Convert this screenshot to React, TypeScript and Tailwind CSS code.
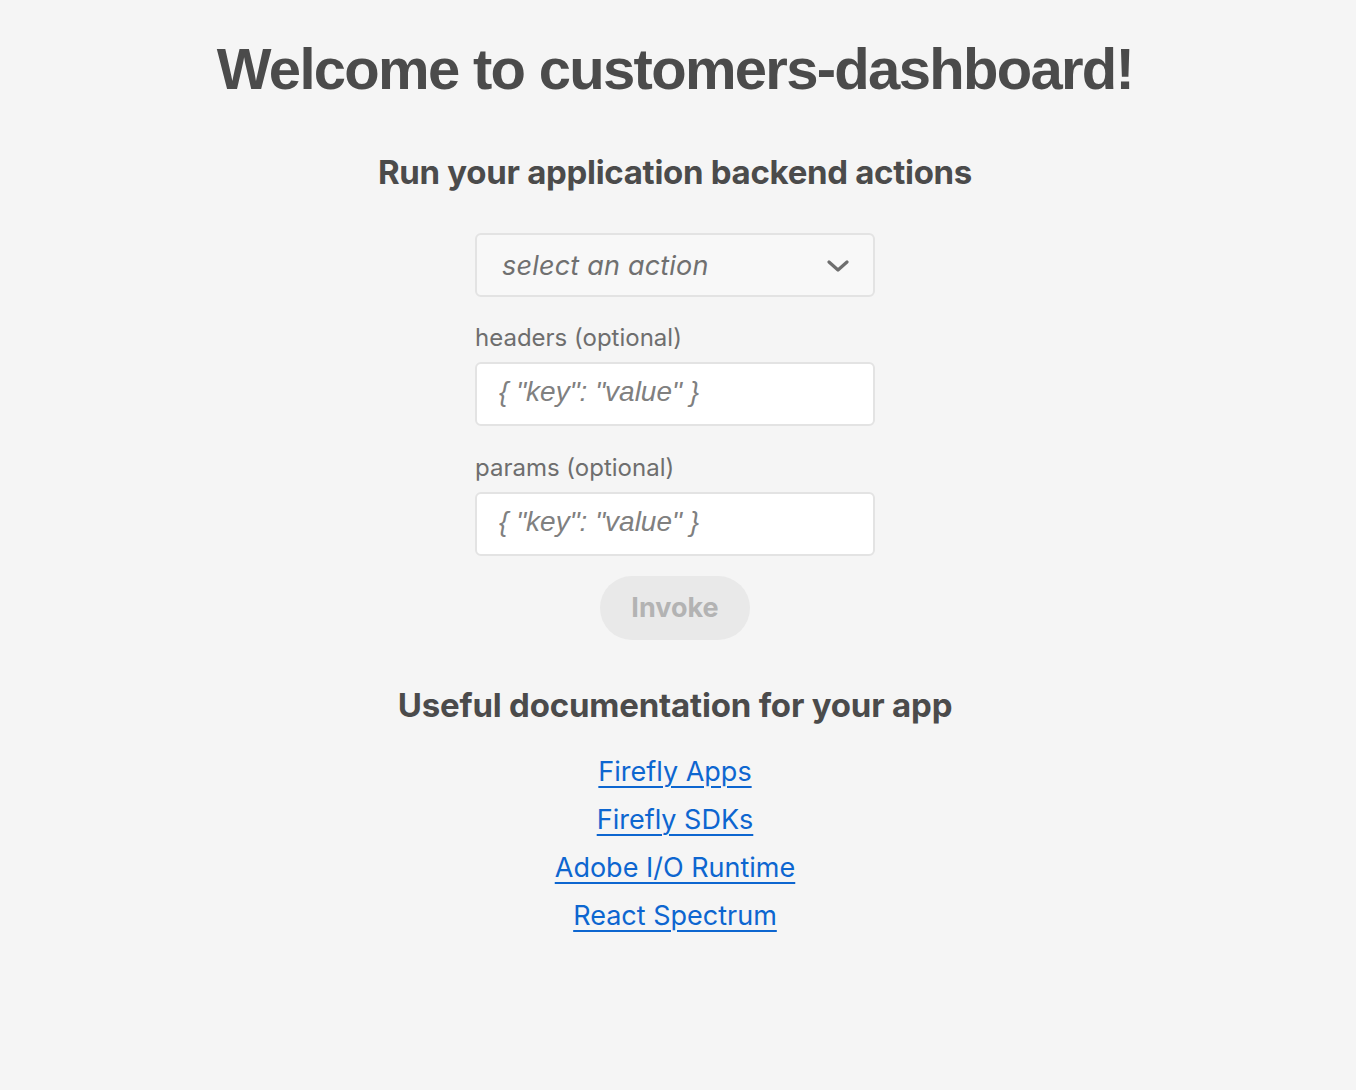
import React from "react";

const links = [
  { label: "Firefly Apps", href: "#" },
  { label: "Firefly SDKs", href: "#" },
  { label: "Adobe I/O Runtime", href: "#" },
  { label: "React Spectrum", href: "#" },
];

function JsonField({ label }: { label: string }) {
  return (
    <div className="flex flex-col">
      <label className="text-[24px] leading-[30px] text-[#6e6e6e] mb-[9px]">{label}</label>
      <input
        placeholder='{ "key": "value" }'
        className="w-[400px] h-[64px] rounded-[6px] border-2 border-[#e3e3e3] bg-white px-[22px] pb-[4px] text-[28px] italic outline-none placeholder:text-[#808080] [font-family:'Liberation_Sans',Arial,sans-serif]"
      />
    </div>
  );
}

export default function App() {
  return (
    <div className="min-h-screen bg-[#f5f5f5] text-[#4b4b4b] [font-family:Inter,'Noto_Sans',sans-serif]">
      <div className="flex flex-col items-center pt-[33px] pr-[6px]">
        <h1 className="text-[58px] leading-[72px] font-bold tracking-[-1.7px] [font-family:'Liberation_Sans',Arial,sans-serif]">
          Welcome to customers-dashboard!
        </h1>

        <h3 className="mt-[47px] text-[33px] leading-[40px] font-bold tracking-[-0.3px]">
          Run your application backend actions
        </h3>

        <div className="mt-[41px] flex flex-col gap-[26px]">
          <button className="w-[400px] h-[64px] rounded-[6px] border-2 border-[#e3e3e3] bg-[#f8f8f8] pl-[25px] pr-[24px] pt-[2px] flex items-center justify-between">
            <span className="text-[27px] italic text-[#707070] tracking-[0.2px]">select an action</span>
            <svg width="22" height="14" viewBox="0 0 22 14" fill="none">
              <path d="M2 3 L11 11 L20 3" stroke="#6e6e6e" strokeWidth="3.2" strokeLinecap="round" strokeLinejoin="round" />
            </svg>
          </button>

          <JsonField label="headers (optional)" />
          <div className="mt-[1px]">
            <JsonField label="params (optional)" />
          </div>
        </div>

        <button
          disabled
          className="mt-[20px] h-[64px] px-[31px] rounded-full bg-[#e9e9e9] text-[27px] font-bold text-[#b3b3b3]"
        >
          Invoke
        </button>

        <h3 className="mt-[45px] text-[33px] leading-[40px] font-bold tracking-[-0.2px]">
          Useful documentation for your app
        </h3>

        <ul className="mt-[28px] flex flex-col items-center gap-[10px]">
          {links.map((l) => (
            <li key={l.label} className="text-[27px] leading-[38px]">
              <a href={l.href} className="text-[#0d66d0] underline underline-offset-[5px] decoration-2">
                {l.label}
              </a>
            </li>
          ))}
        </ul>
      </div>
    </div>
  );
}
